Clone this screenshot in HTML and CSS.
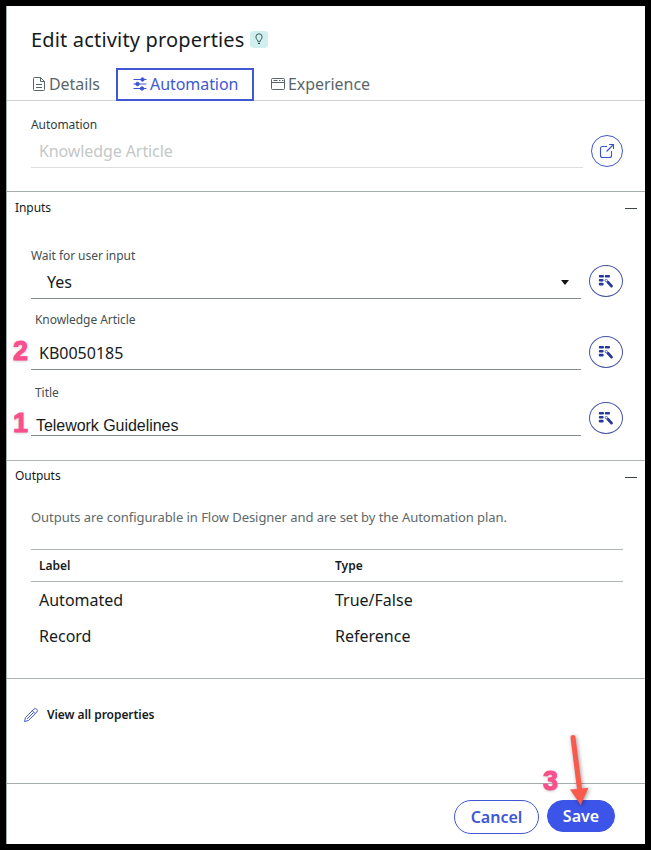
FILE: index.html
```html
<!DOCTYPE html>
<html lang="en">
<head>
<meta charset="utf-8">
<title>Edit activity properties</title>
<link rel="stylesheet" href="styles.css">
</head>
<body>
<svg class="defs" width="0" height="0">
  <symbol id="wand" viewBox="0 0 16 16">
    <g fill="#26389c"><rect x=".8" y="2" width="5.2" height="2.6" rx="1"/><rect x="6.800" y="2" width="5.2" height="2.6" rx="1"/><rect x=".8" y="6" width="4.8" height="2.6" rx="1"/><rect x=".8" y="9.800" width="4.8" height="2.6" rx="1"/></g>
    <path d="M10 9.200 13.500 13.100" stroke="#26389c" stroke-width="2.800" stroke-linecap="round"/>
    <circle cx="8.300" cy="7.600" r="1.200" fill="#fff" stroke="#26389c" stroke-width=".7"/>
  </symbol>
</svg>
<main class="panel">
  <header class="header">
    <h1>Edit activity properties<span class="hint"><svg width="10" height="12" viewBox="0 0 10 12" fill="none" stroke="#28474b" stroke-width=".9"><path d="M3.700 8.300C3.700 6.700 1.900 6 1.900 3.900a3.100 3.100 0 0 1 6.200 0C8.100 6 6.300 6.700 6.300 8.300Z"/><path d="M4 10.300h2" stroke-width="1.300"/></svg></span></h1>
    <nav class="tabs">
      <a class="tab details"><svg width="14" height="16" viewBox="0 0 14 16" fill="none" stroke="#596566"><path d="M1.500 2.500a1 1 0 0 1 1-1H8.500l4 4v8a1 1 0 0 1-1 1h-9a1 1 0 0 1-1-1ZM8.500 1.500v4h4M4 8.500h6M4 11.500h6"/></svg><span>Details</span></a>
      <a class="tab active"><svg width="14" height="16" viewBox="0 0 14 16" fill="#3c55d4" stroke="#3c55d4"><path d="M.5 3.500h13M.5 8h13M.5 12.500h13" stroke-width="1.200"/><circle cx="9.500" cy="3.500" r="1.700"/><circle cx="4.500" cy="8" r="1.700"/><circle cx="9" cy="12.500" r="1.700"/></svg><span>Automation</span></a>
      <a class="tab experience"><svg width="14" height="14" viewBox="0 0 14 14" fill="none" stroke="#596566"><rect x=".5" y="1.500" width="13" height="11" rx="1"/><path d="M.5 5.500h13M2.500 3.500h4M8 3.500h1.500M11 3.500h1.500"/></svg><span>Experience</span></a>
    </nav>
  </header>

  <section class="automation">
    <div class="field disabled"><label>Automation</label><div class="value">Knowledge Article</div></div>
    <button class="round open" aria-label="Open"><svg width="16" height="16" viewBox="0 0 16 16" fill="none" stroke="#3b52d0" stroke-width="1.100"><path d="M8 3.500H3.500a2 2 0 0 0-2 2v7a2 2 0 0 0 2 2h7a2 2 0 0 0 2-2V8M7.500 8.500l7-7M10 1.500h4.500V6"/></svg></button>
  </section>

  <section class="inputs">
    <div class="section-head"><h2>Inputs</h2><i class="collapse"></i></div>
    <div class="row wait"><div class="field"><label>Wait for user input</label><div class="value">Yes<i class="caret"></i></div></div><button class="round" aria-label="Pick data"><svg width="16" height="16"><use href="#wand"/></svg></button></div>
    <div class="row article"><div class="field"><label>Knowledge Article</label><div class="value">KB0050185</div></div><button class="round" aria-label="Pick data"><svg width="16" height="16"><use href="#wand"/></svg></button><b class="step">2</b></div>
    <div class="row title"><div class="field"><label>Title</label><div class="value">Telework Guidelines</div></div><button class="round" aria-label="Pick data"><svg width="16" height="16"><use href="#wand"/></svg></button><b class="step">1</b></div>
  </section>

  <section class="outputs">
    <div class="section-head"><h2>Outputs</h2><i class="collapse"></i></div>
    <p>Outputs are configurable in Flow Designer and are set by the Automation plan.</p>
    <table>
      <thead><tr><th>Label</th><th>Type</th></tr></thead>
      <tbody><tr><td>Automated</td><td>True/False</td></tr><tr><td>Record</td><td>Reference</td></tr></tbody>
    </table>
  </section>

  <section class="view">
    <a><svg width="16" height="16" viewBox="0 0 16 16" fill="none" stroke="#3f57d8" stroke-width="1"><path d="M1.500 14.500l1-4L10.800 2.200a2 2 0 0 1 2.900 2.900L5.500 13.500ZM9.300 3.700l2.900 2.900M4 12l6.500-6.500"/></svg><span>View all properties</span></a>
  </section>

  <footer>
    <button class="btn cancel">Cancel</button>
    <button class="btn save">Save</button>
    <b class="step three">3</b>
    <svg class="arrow" width="40" height="78" viewBox="0 0 40 78"><path d="M12.500 3.500a2.500 2.500 0 0 1 5 0L24 54.500l6.500-.8L22.700 71 12 55.500l7-.5Z" fill="#fa5a4c"/></svg>
  </footer>
</main>
</body>
</html>
```
FILE: styles.css
```css
* { box-sizing: border-box; }
body { margin: 0; background: #000; font-family: "Noto Sans", sans-serif; color: #161b1c; }
.defs { position: absolute; }
.panel { margin: 6px; height: 838px; background: #fff; border-left: 1px solid #a5acac; }
h1, h2, p { margin: 0; font-weight: 400; }
button { font-family: inherit; margin: 0; padding: 0; }
svg { display: block; flex: none; }

.header { height: 95px; padding: 18px 0 0 24px; border-bottom: 1px solid #cfd2d2; }
h1 { display: flex; align-items: center; height: 32px; font-size: 20px; line-height: 32px; letter-spacing: .17px; }
.hint { display: flex; align-items: center; justify-content: center; width: 18px; height: 17px; margin: -2px 0 0 5px; border-radius: 4px; background: #d2efef; }
.tabs { display: flex; height: 33px; margin-top: 12px; }
.tab { display: flex; align-items: center; gap: 3px; font-size: 16px; letter-spacing: -.06px; color: #5b6768; }
.tab span { margin-top: -2px; }
.tab svg { margin-top: -1px; }
.details { width: 85px; padding-left: 1px; }
.active { width: 138px; padding-left: 15px; border: 2px solid #4059d2; color: #4059d2; }
.experience { padding-left: 17px; }

.automation { display: flex; height: 91px; padding: 14px 22px 0 24px; justify-content: space-between; border-bottom: 1px solid #a5adad; }
label { display: block; font-size: 12px; line-height: 20px; letter-spacing: -.06px; color: #454f50; }
.value { font-size: 16px; border-bottom: 1px solid #838b8c; }
.disabled { width: 552px; height: 53px; }
.disabled label { color: #333e40; }
.disabled .value { height: 33px; padding-left: 8px; line-height: 33px; letter-spacing: -.1px; color: #c4c8c8; border-color: #dcdfdf; }
.round { display: flex; align-items: center; justify-content: center; flex: none; width: 34px; height: 32px; border: 1px solid #4351a6; border-radius: 50%; background: #fff; }
.round.open { width: 32px; margin-top: 20px; border-color: #4257c8; }

.inputs { height: 269px; border-bottom: 1px solid #aeb3b3; }
.section-head { display: flex; justify-content: space-between; align-items: center; height: 32px; padding: 0 8px; }
h2 { font-size: 12px; line-height: 20px; letter-spacing: -.06px; }
.outputs h2 { margin-top: -2px; }
.collapse { width: 12px; height: 1px; background: #3d4546; }
.row { position: relative; display: flex; justify-content: space-between; padding: 0 22px 0 24px; }
.row .field { width: 550px; }
.wait { height: 75px; padding-top: 22px; }
.wait .value { position: relative; height: 33px; padding-left: 16px; line-height: 32px; }
.wait .round { margin-top: 19px; }
.caret { position: absolute; right: 12px; top: 14px; border: 4px solid transparent; border-top: 5px solid #111; border-bottom: 0; }
.article { height: 71px; padding-top: 11px; }
.article label, .title label { padding-left: 4px; }
.article .value { height: 40px; padding: 4px 0 0 8px; line-height: 38px; }
.article .round { margin-top: 26px; }
.title { padding-top: 13px; }
.title .value { height: 33px; padding: 12px 0 0 5px; font-family: "Liberation Sans", sans-serif; line-height: 22px; letter-spacing: -.04px; }
.title .round { margin-top: 19px; }
.step { position: absolute; left: 6px; top: 38px; font: 700 27px/28px "Liberation Sans", sans-serif; color: #fa4f8d; -webkit-text-stroke: 1px #fa4f8d; text-shadow: 0 1px 3px #bbb; }
.title .step { top: 39px; }

.outputs { height: 218px; border-bottom: 1px solid #aeb3b3; }
p { padding: 14px 0 0 24px; font-size: 13px; line-height: 20px; letter-spacing: -.05px; color: #5e696a; }
table { width: 592px; margin: 22px 0 0 24px; border-collapse: separate; border-spacing: 0; table-layout: fixed; }
th, td { padding: 0 8px; text-align: left; }
th { height: 33px; font-size: 12px; font-weight: 600; line-height: 20px; border-top: 1px solid #aeb3b3; border-bottom: 1px solid #aeb3b3; }
td { height: 36px; font-size: 16px; line-height: 24px; }

.view { height: 105px; padding: 24px 0 0 16px; border-bottom: 1px solid #a5adad; }
.view a { display: flex; align-items: center; gap: 8px; height: 24px; font-size: 12px; font-weight: 600; letter-spacing: -.06px; }
.view span { margin-top: -2px; }
footer { position: relative; display: flex; justify-content: flex-end; gap: 8px; padding: 16px 30px 0 0; }
.btn { height: 34px; width: 85px; border: 1px solid #4059d2; border-radius: 17px; background: #fff; color: #4059d2; font-size: 16px; font-weight: 600; line-height: 32px; }
.save { width: 68px; height: 32px; line-height: 30px; background: #3c55e8; border-color: #3c55e8; color: #fff; }
.step.three { left: 536px; top: -17px; }
.arrow { position: absolute; left: 551px; top: -50px; filter: drop-shadow(1px 1px 2px #0006); }
```
